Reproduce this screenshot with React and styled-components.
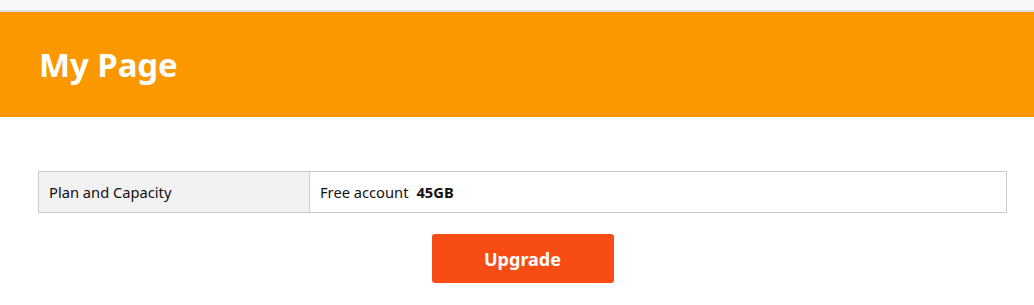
import styled, { createGlobalStyle } from 'styled-components';

const GlobalStyle = createGlobalStyle`
  body {
    margin: 0;
    background: #fff;
    font-family: "Noto Sans", "Open Sans", sans-serif;
  }
`;

const TopStrip = styled.div`
  height: 10px;
  background: #f6f7f9;
  border-bottom: 2px solid #dedede;
`;

const Header = styled.header`
  height: 105px;
  background: #fb9800;
  display: flex;
  align-items: center;
  padding-left: 39px;
`;

const Title = styled.h1`
  margin: 0;
  color: #fff;
  font-size: 33px;
  font-weight: 700;
  letter-spacing: -0.1px;
`;

const Content = styled.main`
  padding: 54px 28px 0 39px;
  display: flex;
  flex-direction: column;
  align-items: center;
  gap: 21px;
`;

const Table = styled.div`
  width: 100%;
  display: grid;
  grid-template-columns: 271px 1fr;
  border: 1px solid #cccccc;
  font-size: 14.7px;
  color: #111;
`;

const Cell = styled.div`
  height: 40px;
  display: flex;
  align-items: center;
  gap: 8px;
  padding-left: 10px;
  background: ${(props) => (props.head ? '#f2f2f2' : '#fff')};
  border-right: ${(props) => (props.head ? '1px solid #cccccc' : 'none')};
`;

const Strong = styled.strong`
  font-weight: 700;
`;

const Button = styled.button`
  width: 182px;
  height: 49px;
  border: none;
  border-radius: 3px;
  background: #f74d15;
  color: #fff;
  font-family: inherit;
  font-size: 18px;
  font-weight: 700;
  cursor: pointer;
`;

export default function App() {
  return (
    <>
      <GlobalStyle />
      <TopStrip />
      <Header>
        <Title>My Page</Title>
      </Header>
      <Content>
        <Table>
          <Cell head>Plan and Capacity</Cell>
          <Cell>
            Free account <Strong>45GB</Strong>
          </Cell>
        </Table>
        <Button>Upgrade</Button>
      </Content>
    </>
  );
}
